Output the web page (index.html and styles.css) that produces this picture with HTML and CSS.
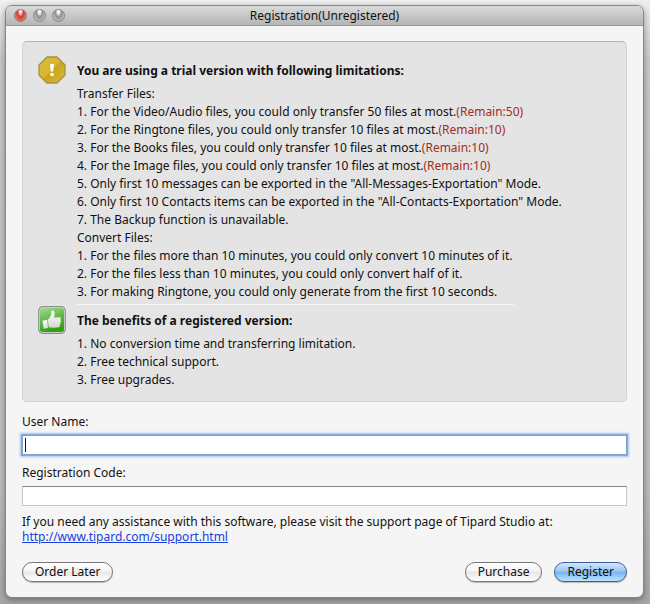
FILE: index.html
```html
<!DOCTYPE html>
<html lang="en">
<head>
<meta charset="utf-8">
<title>Registration(Unregistered)</title>
<link rel="stylesheet" href="styles.css">
</head>
<body>
<main class="window">
  <header class="titlebar">
    <div class="lights">
      <button class="light light-close" type="button" aria-label="Close"></button>
      <button class="light" type="button" aria-label="Minimize"></button>
      <button class="light" type="button" aria-label="Zoom"></button>
    </div>
    <h1 class="title">Registration(Unregistered)</h1>
  </header>
  <form class="content">
    <div class="panel">
      <section class="notice">
        <svg class="icon" viewBox="0 0 28 28" aria-hidden="true">
          <defs>
            <linearGradient id="gold" x1="0" y1="0" x2="1" y2="1">
              <stop offset="0" stop-color="#d9bc42"/>
              <stop offset="0.48" stop-color="#d8b62f"/>
              <stop offset="0.52" stop-color="#c9a41c"/>
              <stop offset="1" stop-color="#dcbd3e"/>
            </linearGradient>
          </defs>
          <path d="M9 1h10l8 8v10l-8 8H9l-8-8V9z" fill="url(#gold)" stroke="#a39145" stroke-width="1.3" stroke-linejoin="round"/>
          <path d="M12 8h4l-.8 7.600h-2.400z" fill="#fff"/>
          <rect x="12.200" y="17" width="3.600" height="3" rx="1" fill="#fff"/>
        </svg>
        <div class="notice-body">
          <h2 class="heading">You are using a trial version with following limitations:</h2>
          <p>Transfer Files:</p>
          <p>1. For the Video/Audio files, you could only transfer 50 files at most.<span class="remain">(Remain:50)</span></p>
          <p>2. For the Ringtone files, you could only transfer 10 files at most.<span class="remain">(Remain:10)</span></p>
          <p>3. For the Books files, you could only transfer 10 files at most.<span class="remain">(Remain:10)</span></p>
          <p>4. For the Image files, you could only transfer 10 files at most.<span class="remain">(Remain:10)</span></p>
          <p>5. Only first 10 messages can be exported in the "All-Messages-Exportation" Mode.</p>
          <p>6. Only first 10 Contacts items can be exported in the "All-Contacts-Exportation" Mode.</p>
          <p>7. The Backup function is unavailable.</p>
          <p>Convert Files:</p>
          <p>1. For the files more than 10 minutes, you could only convert 10 minutes of it.</p>
          <p>2. For the files less than 10 minutes, you could only convert half of it.</p>
          <p>3. For making Ringtone, you could only generate from the first 10 seconds.</p>
          <hr class="divider">
        </div>
      </section>
      <section class="notice">
        <svg class="icon" viewBox="0 0 28 28" aria-hidden="true">
          <defs>
            <linearGradient id="green" x1="0" y1="0" x2="0.3" y2="1">
              <stop offset="0" stop-color="#a3d98e"/>
              <stop offset="0.5" stop-color="#65b94d"/>
              <stop offset="1" stop-color="#30a111"/>
            </linearGradient>
            <linearGradient id="hand" x1="0" y1="0" x2="0" y2="1">
              <stop offset="0" stop-color="#fff"/>
              <stop offset="1" stop-color="#d3d9d2"/>
            </linearGradient>
          </defs>
          <rect x="0.7" y="0.7" width="26.600" height="26.600" rx="4" fill="#ddd" stroke="#8c908c" stroke-width="1.200"/>
          <rect x="2" y="2" width="24" height="24" rx="2.500" fill="url(#green)"/>
          <path d="M4.500 14.800l4.700-1 .8 8.200-4.500.7z" fill="url(#hand)"/>
          <path d="M9.800 13.500c2-1.500 3.500-4 3.600-8 .2-1.500 2.600-1.300 3 .6.400 1.800.1 3.600-.4 5.400l5.400-.2c1.800 0 2 2 .9 2.500 1.100.6.900 2.200-.1 2.700.7.700.5 2-.5 2.400.4.900-.1 2.200-1.300 2.300-2.700.6-6.900.5-9.700.1z" fill="url(#hand)"/>
        </svg>
        <div class="notice-body">
          <h2 class="heading">The benefits of a registered version:</h2>
          <p>1. No conversion time and transferring limitation.</p>
          <p>2. Free technical support.</p>
          <p>3. Free upgrades.</p>
        </div>
      </section>
    </div>
    <div class="field">
      <label for="user">User Name:</label>
      <div class="entry">
        <input class="box box-active" id="user" type="text" autocomplete="off">
        <span class="caret"></span>
      </div>
    </div>
    <div class="field">
      <label for="code">Registration Code:</label>
      <input class="box" id="code" type="text" autocomplete="off">
    </div>
    <div class="help">
      <p>If you need any assistance with this software, please visit the support page of Tipard Studio at:</p>
      <a class="link" href="http://www.tipard.com/support.html">http://www.tipard.com/support.html</a>
    </div>
    <div class="actions">
      <button class="button button-later" type="button">Order Later</button>
      <button class="button" type="button">Purchase</button>
      <button class="button button-primary" type="submit">Register</button>
    </div>
  </form>
</main>
</body>
</html>
```
FILE: styles.css
```css
* {
  box-sizing: border-box;
}

body {
  margin: 0;
  padding: 5px 6px 6px 5px;
  background: linear-gradient(#f0f0f0, #c8c8c8 60px, #bebebe 80%, #a6a6a6);
  color: #111;
  font: 12px/18px "Noto Sans", "Open Sans", sans-serif;
}

h1, h2, p {
  margin: 0;
}

.window {
  border: 1px solid #858585;
  border-radius: 7px;
  background: #f5f5f5;
  box-shadow: 0 2px 6px rgba(0, 0, 0, 0.35);
  overflow: hidden;
}

.titlebar {
  display: grid;
  grid-template-columns: 80px 1fr 80px;
  align-items: center;
  height: 20px;
  border-bottom: 1px solid #989898;
  background: linear-gradient(#dadada, #b5b5b5);
}

.lights {
  display: flex;
  gap: 6px;
  padding-left: 8px;
}

.light {
  width: 13px;
  height: 13px;
  padding: 0;
  border: 1px solid #858585;
  border-radius: 50%;
  background: radial-gradient(ellipse at 50% 15%, #fff 10%, #8f8f8f 40%, #c4c4c4 80%);
}

.light-close {
  border-color: #9a7772;
  background: radial-gradient(ellipse at 50% 15%, #ffe3df 10%, #c93b30 40%, #f08d80 85%);
}

.title {
  font-size: 12px;
  font-weight: 400;
  text-align: center;
}

.content {
  padding: 15px 16px;
}

.panel {
  padding: 14px 15px 12px;
  border: 1px solid #d2d2d2;
  border-top-color: #b5b5b5;
  border-radius: 5px;
  background: #e4e4e4;
}

.notice {
  display: flex;
  gap: 11px;
}

.icon {
  flex: none;
  width: 28px;
  height: 28px;
}

.notice-body {
  min-width: 0;
}

.heading {
  padding: 6px 0 5px;
  font-size: 12px;
  line-height: 18px;
  font-weight: 700;
}

.remain {
  color: #a52b25;
}

.divider {
  width: 437px;
  max-width: 100%;
  height: 1px;
  margin: 3px 0 1px;
  border: 0;
  background: #f6f6f6;
}

.field {
  display: flex;
  flex-direction: column;
  gap: 4px;
  margin-top: 9px;
}

.panel + .field {
  margin-top: 11px;
}

.entry {
  display: flex;
  position: relative;
}

.box {
  width: 100%;
  height: 20px;
  padding: 0 4px;
  border: 1px solid #c5c5c5;
  border-top-color: #858585;
  border-radius: 0;
  background: #fff;
  font: inherit;
  outline: none;
}

.box-active {
  border-color: #7fa3cf;
  box-shadow: 0 0 0 1px #82a9dc, 0 0 2px 2px #a9c5e8;
}

.caret {
  position: absolute;
  top: 3px;
  left: 3px;
  width: 1px;
  height: 14px;
  background: #111;
}

.help {
  display: flex;
  flex-direction: column;
  align-items: flex-start;
  margin-top: 8px;
  line-height: 15px;
}

.link {
  color: #1740e0;
}

.actions {
  display: flex;
  gap: 12px;
  margin-top: 18px;
}

.button {
  height: 20px;
  padding: 0 12px;
  border: 1px solid #777;
  border-radius: 10px;
  background: linear-gradient(#fff, #f4f4f4 45%, #e6e6e6 50%, #fff);
  box-shadow: 0 1px 1px rgba(0, 0, 0, 0.25);
  color: #111;
  font: inherit;
  line-height: 18px;
}

.button-later {
  margin-right: auto;
}

.button-primary {
  border-color: #3e5e9d;
  background: linear-gradient(#d4e6fa, #9ec8f3 45%, #77b3ef 50%, #b9e4ff);
}
```
